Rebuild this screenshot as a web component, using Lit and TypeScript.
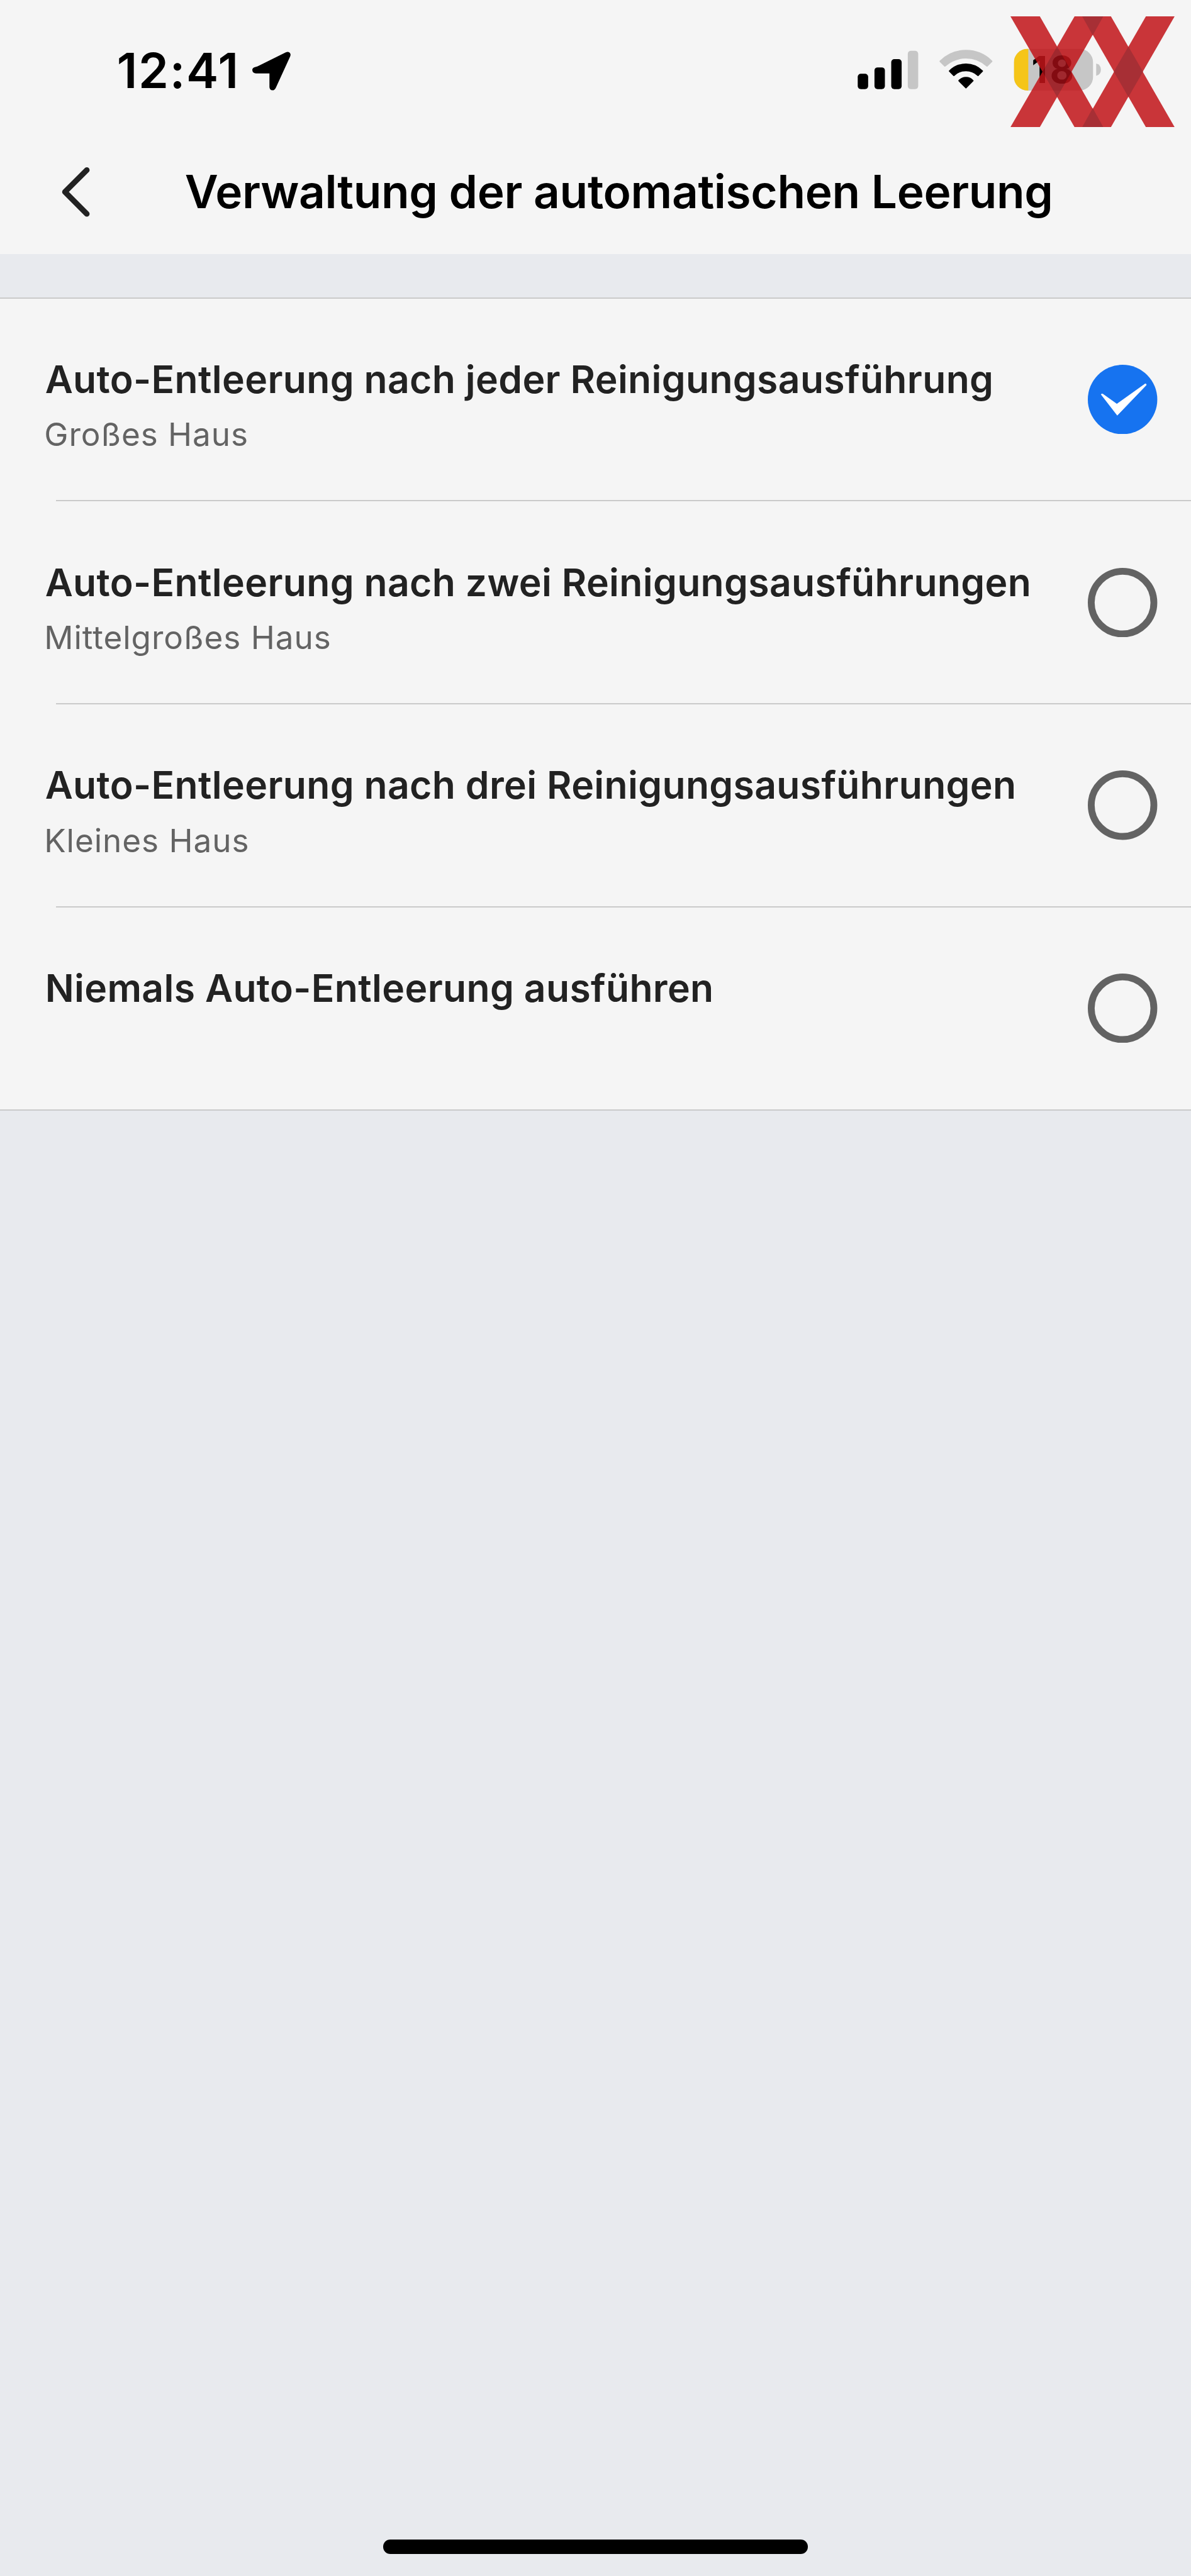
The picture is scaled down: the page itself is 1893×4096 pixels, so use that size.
import { LitElement, html, css, svg, unsafeCSS } from "lit";
import { customElement, property, state } from "lit/decorators.js";
import { classMap } from "lit/directives/class-map.js";

/** Design units are 1/1920 of the screen width; the screen is 1893px wide. */
const SCALE = 1893 / 1920;
const u = (n: number) => unsafeCSS(`${+(n * SCALE).toFixed(3)}px`);

interface Option {
  title: string;
  note?: string;
}

const OPTIONS: Option[] = [
  { title: "Auto-Entleerung nach jeder Reinigungsausführung", note: "Großes Haus" },
  { title: "Auto-Entleerung nach zwei Reinigungsausführungen", note: "Mittelgroßes Haus" },
  { title: "Auto-Entleerung nach drei Reinigungsausführungen", note: "Kleines Haus" },
  { title: "Niemals Auto-Entleerung ausführen" },
];

@customElement("status-bar")
export class StatusBar extends LitElement {
  static styles = css`
    :host {
      display: flex;
      align-items: flex-start;
      justify-content: space-between;
      box-sizing: border-box;
      height: ${u(209)};
      padding: ${u(68.3)} ${u(144.5)} 0 ${u(188.4)};
      color: #000;
    }
    .side {
      display: flex;
      align-items: center;
      height: ${u(94)};
    }
    .time {
      font-size: ${u(78)};
      font-weight: 600;
      line-height: ${u(94)};
      letter-spacing: ${u(1.8)};
    }
    svg {
      display: block;
      height: ${u(94)};
    }
    .arrow {
      width: ${u(66)};
      margin-left: ${u(18.7)};
    }
    .signal {
      width: ${u(98)};
    }
    .wifi {
      width: ${u(86)};
      margin-left: ${u(33.5)};
    }
    .battery {
      width: ${u(142)};
      margin-left: ${u(33.3)};
    }
    .level {
      font-size: 59.6px;
      font-weight: 700;
      letter-spacing: 4px;
    }
  `;

  render() {
    return html`
      <div class="side">
        <span class="time">12:41</span>
        <svg class="arrow" viewBox="405 68.3 66 94">
          <path
            d="M415.500 107.400 L461 84.800 Q465.500 82.800 468 86 Q469.300 88 468.200 91 L444.800 142.300 Q442.800 146 439.600 146 Q434.700 145.600 434.700 140.500 V118.700 H413 Q407.500 118.500 407 113.300 Q407 110.300 410.500 108.900 Z"
          />
        </svg>
      </div>
      <div class="side">
        <svg class="signal" viewBox="1382.700 68.300 98 94">
          <rect x="1383" y="119.300" width="16.800" height="24.700" rx="5" />
          <rect x="1410" y="109" width="16.800" height="35" rx="5" />
          <rect x="1437" y="95.700" width="16.800" height="48.300" rx="5" />
          <rect x="1463.700" y="82.300" width="16.800" height="61.700" rx="5" fill="#c6c6c6" />
        </svg>
        <svg class="wifi" viewBox="1514.200 68.300 86 94" stroke-linejoin="round">
          <path
            fill="#c6c6c6"
            stroke="#c6c6c6"
            stroke-width="3"
            d="M1516 99.200 A58.500 58.500 0 0 1 1598.200 99.200 L1591 106.300 A50.500 50.500 0 0 0 1523.200 106.300 Z"
          />
          <path
            stroke="#000"
            stroke-width="2"
            d="M1530.600 115 A37 37 0 0 1 1583.600 115 L1576.600 122 A28 28 0 0 0 1537.600 122 Z"
          />
          <path
            stroke="#000"
            stroke-width="2"
            d="M1545.800 130.600 A15 15 0 0 1 1568.400 130.600 L1557.100 142 Z"
          />
        </svg>
        <svg class="battery" viewBox="1633.500 68.300 142 94">
          <clipPath id="cell">
            <rect x="1634" y="79" width="127.700" height="67.300" rx="22" />
          </clipPath>
          <g clip-path="url(#cell)">
            <rect x="1634" y="79" width="128" height="68" fill="#c6c6c6" />
            <rect x="1634" y="79" width="23.200" height="68" fill="#f5c518" />
          </g>
          <path fill="#c6c6c6" d="M1766.700 102.700 Q1774.300 104.500 1774.300 112.600 Q1774.300 120.700 1766.700 122.500 Z" />
          <text class="level" x="1662.300" y="134.500">18</text>
        </svg>
      </div>
    `;
  }
}

@customElement("nav-header")
export class NavHeader extends LitElement {
  @property() heading = "";

  static styles = css`
    :host {
      display: flex;
      align-items: center;
      height: ${u(201)};
      padding-left: ${u(96)};
    }
    .back {
      display: block;
      width: ${u(52)};
      height: ${u(90)};
    }
    .heading {
      margin: 0 0 0 ${u(150)};
      font-size: ${u(74)};
      font-weight: 600;
      line-height: ${u(90)};
      letter-spacing: ${u(-0.365)};
      white-space: nowrap;
      color: #000;
    }
  `;

  render() {
    return html`
      <svg class="back" viewBox="96 264.400 52 90">
        <path
          d="M139.600 274 L104.300 309.200 L139.600 344.600"
          fill="none"
          stroke="#222"
          stroke-width="9"
          stroke-linecap="round"
          stroke-linejoin="round"
        />
      </svg>
      <h1 class="heading">${this.heading}</h1>
    `;
  }
}

@customElement("option-row")
export class OptionRow extends LitElement {
  @property({ attribute: false }) option!: Option;
  @property({ type: Boolean }) selected = false;

  static styles = css`
    :host {
      display: flex;
      align-items: center;
      justify-content: space-between;
      height: ${u(325.3)};
      padding: 0 ${u(54)} 0 ${u(72.7)};
    }
    .text {
      align-self: flex-start;
      padding-top: ${u(88.5)};
      white-space: nowrap;
    }
    .title {
      font-size: ${u(61.5)};
      font-weight: 600;
      line-height: ${u(84)};
      letter-spacing: ${u(0.34)};
      color: #222;
    }
    .note {
      margin-top: ${u(12.5)};
      margin-left: ${u(-1.5)};
      font-size: ${u(52)};
      line-height: ${u(68)};
      letter-spacing: ${u(0.95)};
      color: #636363;
    }
    .radio {
      display: block;
      flex: none;
      width: ${u(112)};
      height: ${u(112)};
    }
  `;

  render() {
    const mark = this.selected
      ? svg`<circle cx="56" cy="56" r="56" fill="#1673f0" />
          <path fill="#fff" stroke="#fff" stroke-width="0.800" stroke-linejoin="round"
            d="M21.500 47.800 Q22.500 46.400 24.500 47.500 L46.800 63.400 L92.500 30.800 Q95 30.800 94 33 L47.500 81.500 Z" />`
      : svg`<circle cx="56" cy="56" r="50.500" fill="none" stroke="#636363" stroke-width="11" />`;
    return html`
      <div class="text">
        <div class="title">${this.option.title}</div>
        ${this.option.note ? html`<div class="note">${this.option.note}</div>` : null}
      </div>
      <svg class="radio" viewBox="0 0 112 112">${mark}</svg>
    `;
  }
}

@customElement("app-root")
export class AppRoot extends LitElement {
  @state() private selected = 0;

  static styles = css`
    :host {
      display: flex;
      flex-direction: column;
      position: relative;
      box-sizing: border-box;
      width: 1893px;
      height: 4096px;
      overflow: hidden;
      background: #e8eaee;
      font-family: Inter, "Liberation Sans", sans-serif;
    }
    .top {
      height: ${u(410)};
      background: #f5f5f5;
    }
    .list {
      margin-top: ${u(69.5)};
      background: #f5f5f5;
      border-top: 2px solid #cacaca;
    }
    .divider {
      height: 2px;
      margin-left: ${u(90)};
      background: #cacaca;
    }
    .divider.full {
      margin-left: 0;
    }
    .home {
      width: ${u(685.3)};
      height: ${u(23)};
      margin: auto auto ${u(35.7)};
      border-radius: ${u(11.5)};
      background: #000;
    }
    .brand {
      position: absolute;
      top: ${u(26)};
      right: ${u(26)};
      width: ${u(264.7)};
      height: ${u(178.7)};
      opacity: 0.85;
    }
  `;

  render() {
    return html`
      <div class="top">
        <status-bar></status-bar>
        <nav-header heading="Verwaltung der automatischen Leerung"></nav-header>
      </div>
      <div class="list">
        ${OPTIONS.map(
          (option, i) => html`
            <option-row
              .option=${option}
              ?selected=${i === this.selected}
              @click=${() => (this.selected = i)}
            ></option-row>
            <div class=${classMap({ divider: true, full: i === OPTIONS.length - 1 })}></div>
          `
        )}
      </div>
      <div class="home"></div>
      <svg class="brand" viewBox="1629.300 26 264.700 178.700">
        <g fill="#c21419">
          <path d="M1629.300 26 H1676.700 L1779 204.700 H1732.700 Z" />
          <path d="M1732.700 26 H1779 L1676.700 204.700 H1629.300 Z" />
          <path d="M1745 26 H1791.300 L1894 204.700 H1847.700 Z" />
          <path d="M1847.700 26 H1894 L1791.300 204.700 H1745 Z" />
        </g>
        <g fill="#9a0d14">
          <path d="M1745 26 H1779 L1762 56.500 Z" />
          <path d="M1745 204.700 H1779 L1762 174.200 Z" />
          <path d="M1704.500 74.600 L1728 115.350 L1704.500 156.100 L1681 115.350 Z" />
          <path d="M1819.500 74.600 L1843 115.350 L1819.500 156.100 L1796 115.350 Z" />
        </g>
      </svg>
    `;
  }
}
